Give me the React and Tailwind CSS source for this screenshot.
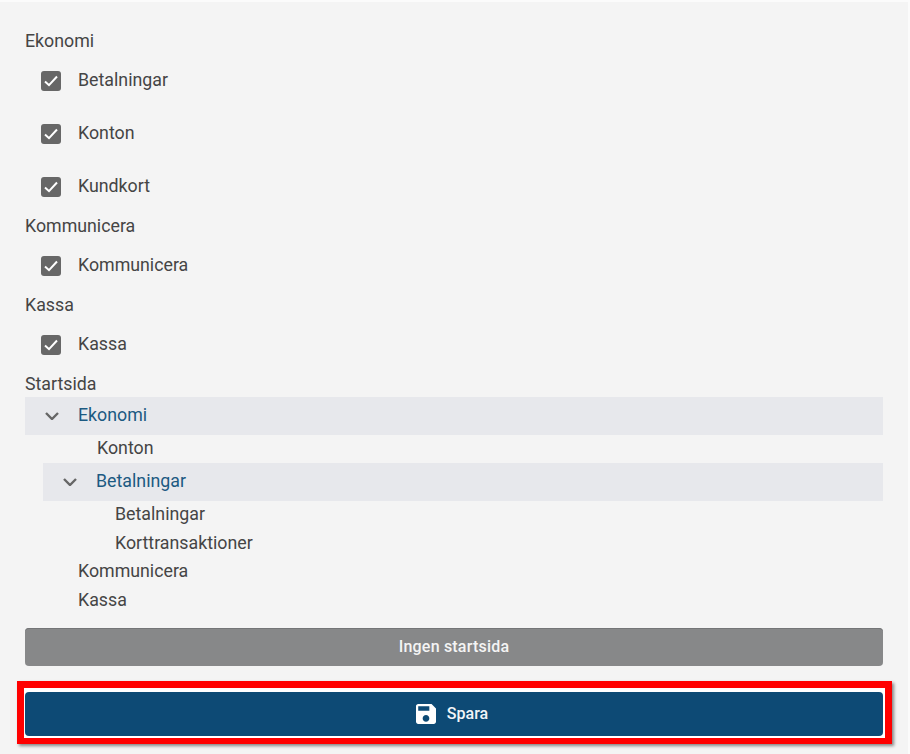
import React from 'react';

function Check() {
  return (
    <span className="flex h-5 w-5 items-center justify-center rounded-[3px] bg-[#676767]">
      <svg width="14" height="12" viewBox="0 0 14 12" fill="none" stroke="#fff" strokeWidth="2">
        <polyline points="1,6.5 5,10.2 13,1.5" />
      </svg>
    </span>
  );
}

function Chevron() {
  return (
    <svg width="14" height="8" viewBox="0 0 14 8" fill="none" stroke="#666" strokeWidth="2.4">
      <polyline points="1,1 7,7 13,1" />
    </svg>
  );
}

function Label({ children }) {
  return <div className="flex h-[26px] items-center">{children}</div>;
}

function CheckRow({ children }) {
  return (
    <div className="flex h-[53px] items-center pl-4">
      <Check />
      <span className="ml-[17px]">{children}</span>
    </div>
  );
}

function Leaf({ indent, children }) {
  return <div className={`flex h-[28.4px] items-center ${indent}`}>{children}</div>;
}

export default function App() {
  return (
    <div className="h-[754px] w-[910px] overflow-hidden border-t-2 border-r-2 border-[#fbfbfb] bg-[#f4f4f4] pt-[26px] text-[17.8px] text-[#454545] [font-family:Roboto,sans-serif]">
      <div className="mx-[25px] w-[858px]">
        <Label>Ekonomi</Label>
        <CheckRow>Betalningar</CheckRow>
        <CheckRow>Konton</CheckRow>
        <CheckRow>Kundkort</CheckRow>
        <Label>Kommunicera</Label>
        <CheckRow>Kommunicera</CheckRow>
        <Label>Kassa</Label>
        <CheckRow>Kassa</CheckRow>
        <Label>Startsida</Label>

        <div>
          <div className="flex h-[37.6px] items-center bg-[#e7e8ec] pl-[20px] text-[#1c5a82]">
            <Chevron />
            <span className="ml-[19px]">Ekonomi</span>
          </div>
          <Leaf indent="pl-[72px]">Konton</Leaf>
          <div className="ml-[18px] flex h-[37.6px] items-center bg-[#e7e8ec] pl-[20px] text-[#1c5a82]">
            <Chevron />
            <span className="ml-[19px]">Betalningar</span>
          </div>
          <Leaf indent="pl-[90px]">Betalningar</Leaf>
          <Leaf indent="pl-[90px]">Korttransaktioner</Leaf>
          <Leaf indent="pl-[53px]">Kommunicera</Leaf>
          <Leaf indent="pl-[53px]">Kassa</Leaf>
        </div>

        <button className="mt-[14px] h-[38px] w-full rounded-[4px] bg-[#878889] text-[16px] font-medium tracking-[0.2px] text-[#f4f4f4] shadow-[inset_0_1px_0_#747577]">
          Ingen startsida
        </button>
      </div>

      <div className="mt-[15px] ml-[17px] h-[63px] w-[875px] border-x-[7px] border-t-[7px] border-b-[6px] border-[#ff0000] bg-white pt-1 pl-px shadow-[2px_2px_3px_rgba(0,0,0,0.45)]">
        <button className="flex h-[44px] w-[858px] items-center justify-center rounded-[4px] bg-[#0d4a75] pr-1 text-[16px] font-medium text-[#f2f5f8]">
          <svg width="20" height="20" viewBox="3 3 18 18" fill="#fff" className="mr-[11px]">
            <path d="M17 3H5c-1.11 0-2 .9-2 2v14c0 1.1.89 2 2 2h14c1.1 0 2-.9 2-2V7l-4-4zm-5 16c-1.66 0-3-1.34-3-3s1.34-3 3-3 3 1.34 3 3-1.34 3-3 3zm3-10H5V5h10v4z" />
          </svg>
          Spara
        </button>
      </div>
    </div>
  );
}
